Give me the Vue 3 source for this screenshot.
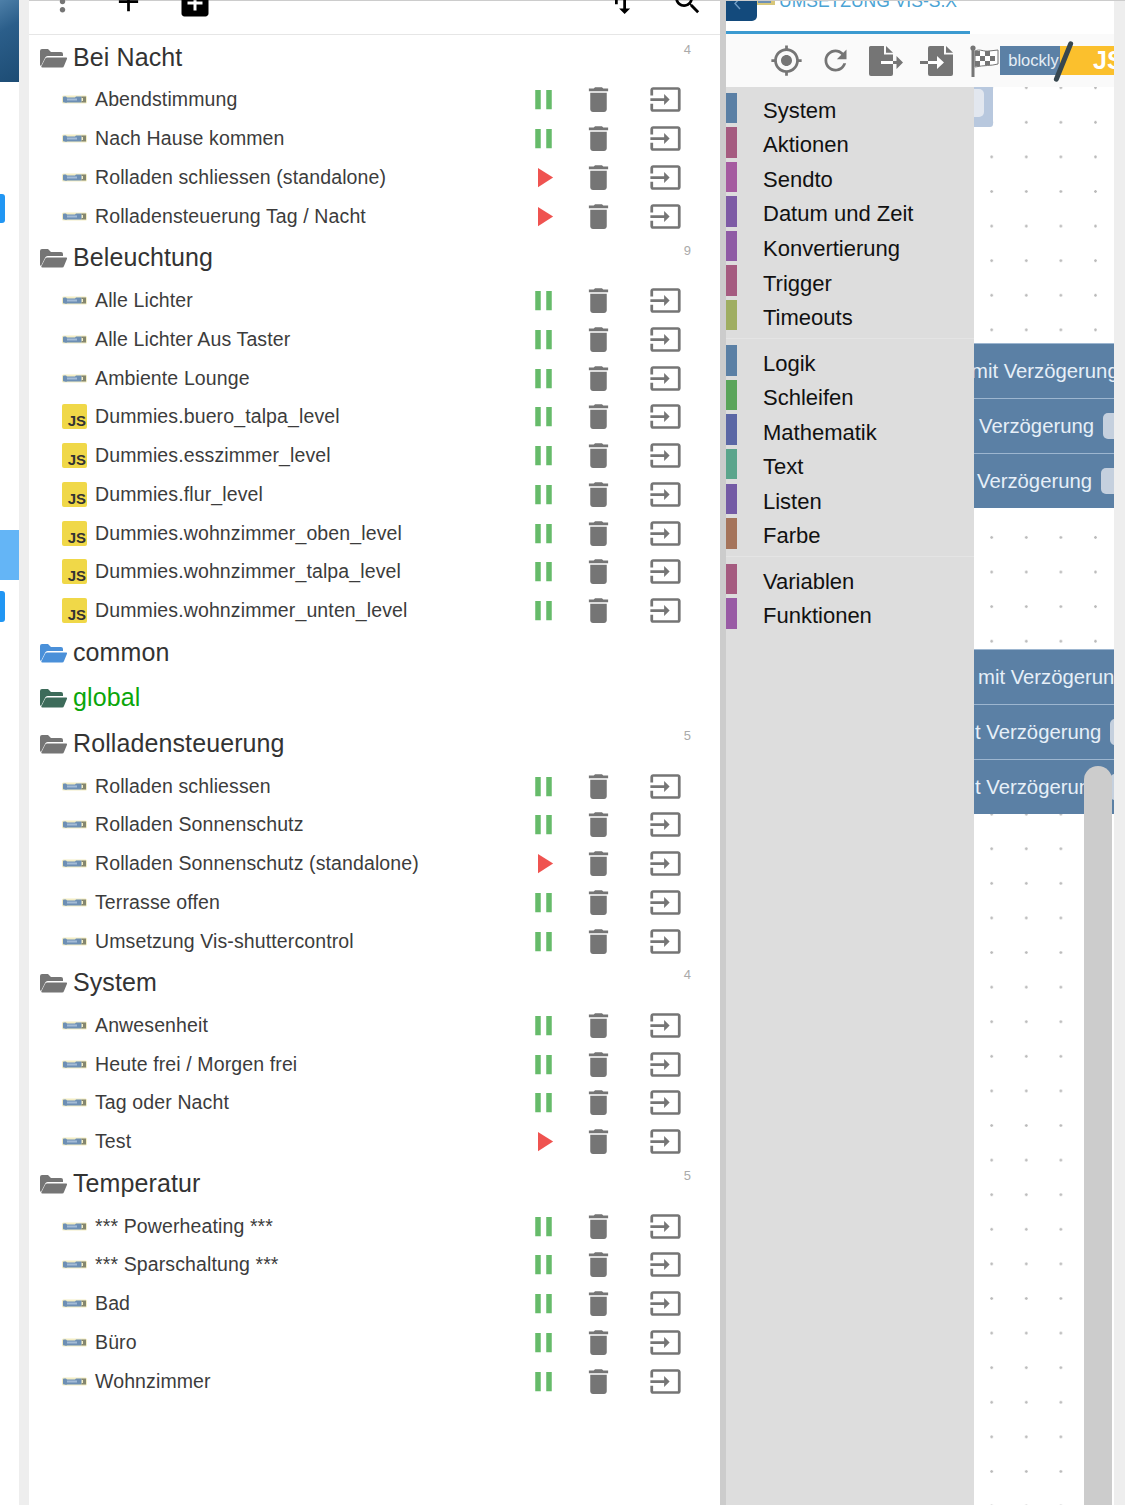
<script setup>
const groups = [
  { name: 'Bei Nacht', count: 4, scripts: [
    ['Abendstimmung', 'b', 1], ['Nach Hause kommen', 'b', 1], ['Rolladen schliessen (standalone)', 'b', 0], ['Rolladensteuerung Tag / Nacht', 'b', 0] ] },
  { name: 'Beleuchtung', count: 9, scripts: [
    ['Alle Lichter', 'b', 1], ['Alle Lichter Aus Taster', 'b', 1], ['Ambiente Lounge', 'b', 1],
    ['Dummies.buero_talpa_level', 'j', 1], ['Dummies.esszimmer_level', 'j', 1], ['Dummies.flur_level', 'j', 1],
    ['Dummies.wohnzimmer_oben_level', 'j', 1], ['Dummies.wohnzimmer_talpa_level', 'j', 1], ['Dummies.wohnzimmer_unten_level', 'j', 1] ] },
  { name: 'common', tone: 'blue', scripts: [] },
  { name: 'global', tone: 'green', scripts: [] },
  { name: 'Rolladensteuerung', count: 5, scripts: [
    ['Rolladen schliessen', 'b', 1], ['Rolladen Sonnenschutz', 'b', 1], ['Rolladen Sonnenschutz (standalone)', 'b', 0], ['Terrasse offen', 'b', 1], ['Umsetzung Vis-shuttercontrol', 'b', 1] ] },
  { name: 'System', count: 4, scripts: [
    ['Anwesenheit', 'b', 1], ['Heute frei / Morgen frei', 'b', 1], ['Tag oder Nacht', 'b', 1], ['Test', 'b', 0] ] },
  { name: 'Temperatur', count: 5, scripts: [
    ['*** Powerheating ***', 'b', 1], ['*** Sparschaltung ***', 'b', 1], ['Bad', 'b', 1], ['Büro', 'b', 1], ['Wohnzimmer', 'b', 1] ] },
]
const toolbox = [
  [['System', '#5b80a5'], ['Aktionen', '#a55b80'], ['Sendto', '#a55ba0'], ['Datum und Zeit', '#7d5ba5'], ['Konvertierung', '#8f5ba5'], ['Trigger', '#a55b80'], ['Timeouts', '#9fae62']],
  [['Logik', '#5b80a5'], ['Schleifen', '#5ba55b'], ['Mathematik', '#5b67a5'], ['Text', '#5ba58c'], ['Listen', '#745ba5'], ['Farbe', '#a5745b']],
  [['Variablen', '#a55b80'], ['Funktionen', '#995ba5']],
]
const blockGroups = [
  { rows: [
    { text: 'mit Verzögerung', x: -3 }, { text: 'Verzögerung', x: 5, field: true }, { text: 'Verzögerung', x: 3, field: true } ] },
  { rows: [
    { text: 'mit Verzögerun', x: 4 }, { text: 't Verzögerung', x: 1, field: true }, { text: 't Verzögerung', x: 1, field: true } ] },
]
const paths = {
  pause: 'M6 19h4V5H6v14zm8-14v14h4V5h-4z',
  play: 'M8 5v14l11-7z',
  trash: 'M6 19c0 1.1.9 2 2 2h8c1.1 0 2-.9 2-2V7H6v12zM19 4h-3.5l-1-1h-5l-1 1H5v2h14V4z',
  input: 'M21 3.01H3c-1.1 0-2 .9-2 2V9h2V4.99h18v14.03H3V15H1v4.01c0 1.1.9 1.98 2 1.98h18c1.1 0 2-.88 2-1.98v-14c0-1.11-.9-2-2-2zM11 16l4-4-4-4v3H1v2h10v3z',
}
</script>

<template>
  <div class="page">
    <aside class="rail">
      <div class="rail-tile"></div>
      <div class="rail-btn first"></div>
      <div class="rail-light"></div>
      <div class="rail-btn second"></div>
    </aside>
    <div class="strip"></div>

    <main class="panel">
      <header class="panel-bar">
        <svg class="ic grey" viewBox="0 0 24 24"><path d="M12 8c1.1 0 2-.9 2-2s-.9-2-2-2-2 .9-2 2 .9 2 2 2zm0 2c-1.1 0-2 .9-2 2s.9 2 2 2 2-.9 2-2-.9-2-2-2zm0 6c-1.1 0-2 .9-2 2s.9 2 2 2 2-.9 2-2-.9-2-2-2z"/></svg>
        <svg class="ic" viewBox="0 0 24 24"><path d="M19 13h-6v6h-2v-6H5v-2h6V5h2v6h6v2z"/></svg>
        <svg class="ic big" viewBox="0 0 24 24"><path d="M19 3H5c-1.11 0-2 .9-2 2v14c0 1.1.89 2 2 2h14c1.1 0 2-.9 2-2V5c0-1.1-.9-2-2-2zm-2 10h-4v4h-2v-4H7v-2h4V7h2v4h4v2z"/></svg>
        <svg class="ic sort" viewBox="0 0 24 24"><path d="M16 17.01V10h-2v7.01h-3L15 21l4-3.99h-3zM9 3L5 6.99h3V14h2V6.99h3L9 3z"/></svg>
        <svg class="ic" viewBox="0 0 24 24"><path d="M15.5 14h-.79l-.28-.27C15.41 12.59 16 11.11 16 9.5 16 5.91 13.09 3 9.5 3S3 5.91 3 9.5 5.91 16 9.5 16c1.61 0 3.09-.59 4.23-1.57l.27.28v.79l5 4.99L20.49 19l-4.99-5zm-6 0C7.01 14 5 11.99 5 9.5S7.01 5 9.5 5 14 7.01 14 9.5 11.99 14 9.5 14z"/></svg>
      </header>

      <section v-for="g in groups" :key="g.name">
        <div class="group-head" :class="g.tone">
          <svg class="folder" viewBox="0 0 27 20">
            <path d="M0 17V3a2 2 0 0 1 2-2h6l3 3h10a2 2 0 0 1 2 2v2H8a3 3 0 0 0-3 2L1 18z"/>
            <path d="M7 9.5h19a1 1 0 0 1 1 1.3L24 18a2 2 0 0 1-2 1.5H2.5a1 1 0 0 1-1-1.4L5 11a2 2 0 0 1 2-1.5z"/>
          </svg>
          <span class="group-name">{{ g.name }}</span>
          <span v-if="g.count" class="count">{{ g.count }}</span>
        </div>
        <div v-for="s in g.scripts" :key="s[0]" class="row">
          <svg v-if="s[1] === 'b'" class="blockly" viewBox="0 0 25 9">
            <rect x="0" y="0.5" width="25" height="8" rx="1.5" fill="#f3edc4"/>
            <path d="M1 2.500a1 1 0 0 1 1-1h2l1 1h8l1-1h5.500v6H5l-1 .5-1-.5H2a1 1 0 0 1-1-1z" fill="#6d8fb4"/>
            <rect x="19.500" y="1.500" width="4.500" height="1.500" fill="#85876f"/>
            <rect x="21" y="3" width="3" height="3" fill="#85876f"/>
            <rect x="19.500" y="6" width="4.500" height="1.500" fill="#85876f"/>
            <rect x="5" y="3.500" width="10" height="2" fill="#a3bbd6"/>
          </svg>
          <span v-else class="js"><span>JS</span></span>
          <span class="script-name">{{ s[0] }}</span>
          <svg class="act" :class="s[2] ? 'on' : 'off'" viewBox="0 0 24 24"><path :d="s[2] ? paths.pause : paths.play"/></svg>
          <svg class="act tool trash" viewBox="0 0 24 24"><path :d="paths.trash"/></svg>
          <svg class="act tool input" viewBox="0 0 24 24"><path :d="paths.input"/></svg>
        </div>
      </section>
    </main>

    <div class="divider"></div>

    <div class="editor">
      <div class="editor-main">
        <div class="tabbar">
          <div class="back"><svg viewBox="0 0 12 12"><path d="M8 -3L3 2.5 8 8" fill="none" stroke="#6f9cc4" stroke-width="1.4"/></svg></div>
          <svg class="tab-ic" viewBox="0 0 18 8"><rect width="18" height="8" fill="#d8c77a"/><rect x="1" y="1" width="13" height="5" fill="#6d8fb4"/></svg>
          <span class="tab-title">UMSETZUNG VIS-S.X</span>
        </div>
        <div class="toolbar">
          <svg class="tb target" viewBox="0 0 24 24"><path d="M12 8c-2.21 0-4 1.79-4 4s1.79 4 4 4 4-1.79 4-4-1.79-4-4-4zm8.94 3c-.46-4.17-3.77-7.48-7.94-7.94V1h-2v2.06C6.83 3.52 3.52 6.83 3.06 11H1v2h2.06c.46 4.17 3.77 7.48 7.94 7.94V23h2v-2.06c4.17-.46 7.48-3.77 7.94-7.94H23v-2h-2.06zM12 19c-3.87 0-7-3.13-7-7s3.13-7 7-7 7 3.13 7 7-3.13 7-7 7z"/></svg>
          <svg class="tb refresh" viewBox="0 0 24 24"><path d="M17.65 6.35C16.2 4.9 14.21 4 12 4c-4.42 0-7.99 3.58-7.99 8s3.57 8 7.99 8c3.73 0 6.84-2.55 7.73-6h-2.08c-.82 2.33-3.04 4-5.65 4-3.31 0-6-2.69-6-6s2.69-6 6-6c1.66 0 3.14.69 4.22 1.78L13 11h7V4l-2.35 2.35z"/></svg>
          <svg class="doc export" viewBox="0 0 34 30">
            <path d="M1.5 0H15v8.500h9V28a2 2 0 0 1-2 2H2a2 2 0 0 1-2-2V1.500A1.500 1.500 0 0 1 1.500 0z"/>
            <path d="M17 0l7 6.800h-7z"/>
            <rect x="12" y="15" width="12" height="3" fill="#fff"/>
            <path d="M24 15h3.500v-5l6.500 6.500-6.500 6.500v-5H24z"/>
          </svg>
          <svg class="doc import" viewBox="0 0 34 30">
            <path d="M10 0h14v8.500h9V28a2 2 0 0 1-2 2H10a2 2 0 0 1-2-2V2a2 2 0 0 1 2-2z"/>
            <path d="M26 0l7 6.800h-7z"/>
            <rect x="0" y="15" width="8" height="3"/>
            <path d="M8 15h9v-5l7 6.500-7 6.500v-5H8z" fill="#fff"/>
          </svg>
          <div class="switch">
            <svg class="flag" viewBox="0 0 30 32">
              <circle cx="3" cy="3" r="2.600"/>
              <rect x="1.500" y="3" width="3" height="29"/>
              <path d="M5 6c5-2.500 9 1 14 0l9-1v14c-7 2-14 1-23 3z" fill="#fff" stroke="#757575"/>
              <path d="M5 6h5v5H5zM15 6h5v5h-5zM10 11h5v5h-5zM20 11h5v5h-5zM5 16h5v5H5zM15 16h5v4h-5z"/>
            </svg>
            <span class="sw-blockly">blockly</span>
            <span class="sw-js">JS</span>
            <span class="slash"></span>
          </div>
        </div>
        <div class="canvas">
          <nav class="toolbox">
            <div v-for="(sec, i) in toolbox" :key="i" class="tb-section">
              <div v-for="item in sec" :key="item[0]" class="tb-item">
                <span class="swatch" :style="{ background: item[1] }"></span>
                <span class="tb-label">{{ item[0] }}</span>
              </div>
            </div>
          </nav>
          <div class="workspace">
            <div class="ghost"><span></span></div>
            <div v-for="(b, i) in blockGroups" :key="i" class="block-group" :class="'bg' + i">
              <div v-for="(r, j) in b.rows" :key="j" class="block-row">
                <span class="block-text" :style="{ marginLeft: r.x + 'px' }">{{ r.text }}</span>
                <span v-if="r.field" class="field"></span>
              </div>
            </div>
            <div class="scroll-thumb"></div>
          </div>
        </div>
      </div>
      <div class="edge"></div>
    </div>
  </div>
</template>

<style>
html, body { margin: 0; padding: 0; background: #fff; }
</style>

<style scoped>
.page {
  display: flex; width: 1125px; height: 1505px; overflow: hidden;
  font-family: "Liberation Sans", Arial, sans-serif; color: #333; background: #fff; position: relative;
}
.rail { width: 19px; flex: none; display: flex; flex-direction: column; }
.rail-tile { height: 82px; background: linear-gradient(150deg, #4d7fa8 0%, #2b5e8a 35%, #1d4c74 100%); }
.rail-btn { width: 5px; background: #2196f3; border-radius: 0 3px 3px 0; }
.rail-btn.first { height: 29px; margin-top: 112px; }
.rail-light { height: 50px; margin-top: 307px; background: #64b5f6; }
.rail-btn.second { height: 31px; margin-top: 11px; }
.strip { width: 10px; flex: none; background: #eee; }

.panel { width: 691px; flex: none; background: #fff; }
.panel-bar {
  height: 35px; box-sizing: border-box; border-top: 1px solid #ccc; border-bottom: 1.5px solid #e6e6e6;
  display: flex; align-items: flex-end; gap: 33px; padding: 0 16px 0 16.5px;
}
.ic { width: 33px; height: 33px; flex: none; margin-bottom: 16.5px; fill: #000; }
.ic.grey { fill: #757575; }
.ic.big { width: 36px; height: 36px; margin-bottom: 13.5px; margin-left: -1px; }
.ic.sort { margin-left: auto; margin-right: 1px; }

.group-head { height: 45.6px; display: flex; align-items: center; padding: 0 29px 0 11px; position: relative; }
.folder { width: 27px; height: 20px; flex: none; margin-right: 6px; fill: #757575; }
.group-name { font-size: 25px; letter-spacing: 0.1px; color: #333; margin-top: -1px; }
.count { margin-left: auto; align-self: flex-start; padding-top: 7px; font-size: 13px; color: #aaa; }
.blue .folder { fill: #4a90d9; }
.green .folder { fill: #3d6b5a; }
.green .group-name { color: #0aa60a; }

.row { height: 38.75px; display: flex; align-items: center; padding: 0 38.5px 0 33px; }
.blockly { width: 25px; height: 9px; flex: none; }
.js {
  width: 25px; height: 25px; flex: none; background: #f0d848; border-radius: 2px; position: relative;
}
.js span {
  position: absolute; right: 1px; bottom: 0; font-size: 15px; line-height: 16px; font-weight: 700; color: #333;
}
.script-name { margin-left: 8px; flex: 1; font-size: 19.5px; letter-spacing: 0.12px; color: #3c3c3c; white-space: nowrap; }
.act { width: 33px; height: 33px; flex: none; }
.act.on { fill: #66bb6a; }
.act.off { fill: #ef5350; }
.act.tool { fill: #757575; }
.trash { margin-left: 22.5px; }
.input { margin-left: 33.5px; }

.divider { width: 6px; flex: none; background: #ccc; }
.editor { flex: 1; display: flex; min-width: 0; }
.editor-main { flex: 1; min-width: 0; display: flex; flex-direction: column; }
.edge { width: 11px; flex: none; background: #eee; border-top: 1px solid #ccc; }

.tabbar {
  height: 34px; box-sizing: border-box; display: flex; align-items: flex-start; overflow: hidden;
  border-top: 1px solid #ccc; position: relative; background: #fff;
}
.tabbar::after { content: ""; position: absolute; left: 0; bottom: 0; width: 244px; height: 3px; background: #3b9ad0; }
.back { width: 31px; height: 20px; background: #134a7c; border-radius: 0 0 5px 0; flex: none; }
.back svg { width: 12px; height: 12px; display: block; margin-left: 6px; overflow: visible; }
.tab-ic { width: 18px; height: 8px; flex: none; margin-top: -4px; }
.tab-title { margin: -11px 0 0 4px; font-size: 17.5px; line-height: 22px; color: #4aa3d4; white-space: nowrap; }

.toolbar { height: 53px; background: #fafafa; display: flex; align-items: center; position: relative; flex: none; }
.tb { width: 33px; height: 33px; fill: #757575; flex: none; }
.target { margin-left: 44px; }
.refresh { margin-left: 16px; }
.doc { width: 34px; height: 30px; fill: #757575; flex: none; }
.export { margin-left: 17px; }
.import { margin-left: 17px; }
.switch { margin-left: 16px; display: flex; align-items: center; position: relative; flex: 1; min-width: 0; height: 100%; overflow: hidden; }
.flag { width: 30px; height: 32px; fill: #757575; flex: none; }
.sw-blockly {
  width: 60px; height: 29px; line-height: 29px; text-align: center; flex: none;
  background: #5b80a5; color: #e6eef6; font-size: 16.5px; box-sizing: border-box; padding-left: 7px;
}
.sw-js {
  flex: 1; height: 29px; line-height: 29px; background: #fbc02d; color: #fff; font-size: 25px; font-weight: 700;
  padding-left: 33px; white-space: nowrap; overflow: hidden;
}
.slash {
  position: absolute; left: 91px; top: 6px; width: 5px; height: 43px; background: #37474f; border-radius: 3px;
  transform: rotate(22deg);
}

.canvas { flex: 1; display: flex; min-height: 0; }
.toolbox { width: 248px; flex: none; background: #ddd; padding-top: 3.5px; box-sizing: border-box; }
.tb-section { border-bottom: 1.5px solid #e4e4e4; padding-bottom: 5.5px; margin-bottom: 4.5px; }
.tb-section:last-child { border-bottom: 0; }
.tb-item { height: 34.55px; display: flex; align-items: center; font-size: 22px; color: #111; }
.tb-label { padding-top: 6px; }
.swatch { width: 11px; height: 30.5px; flex: none; margin-right: 26px; }

.workspace {
  flex: 1; min-width: 0; position: relative; overflow: hidden; background-color: #fff;
  background-image: radial-gradient(circle, #bbb 0, #bbb 1px, transparent 1.6px);
  background-size: 34.6px 34.6px; background-position: 0.4px -16.6px;
}
.ghost {
  position: absolute; left: 0; top: 0; width: 19px; height: 40px; background: #b8c8de; border-radius: 0 0 3px 0;
}
.ghost span { display: block; width: 10px; height: 28px; margin-top: 2px; background: #e2e7ef; border-radius: 0 5px 5px 0; }
.block-group { position: absolute; left: 0; right: 0; background: #5b80a5; }
.bg0 { top: 256px; }
.bg1 { top: 562px; }
.block-row {
  height: 55px; box-sizing: border-box; display: flex; align-items: center; white-space: nowrap;
  border-top: 1px solid #9db6d0; overflow: hidden;
}
.block-text { font-size: 20.3px; color: #e6eff8; flex: none; }
.field { width: 26px; height: 26px; background: #c5d0de; border-radius: 5px; margin-left: 9px; flex: none; }
.scroll-thumb {
  position: absolute; left: 110px; top: 679px; width: 27.500px; height: 800px; background: #ccc; border-radius: 14px 14px 0 0;
}
</style>
